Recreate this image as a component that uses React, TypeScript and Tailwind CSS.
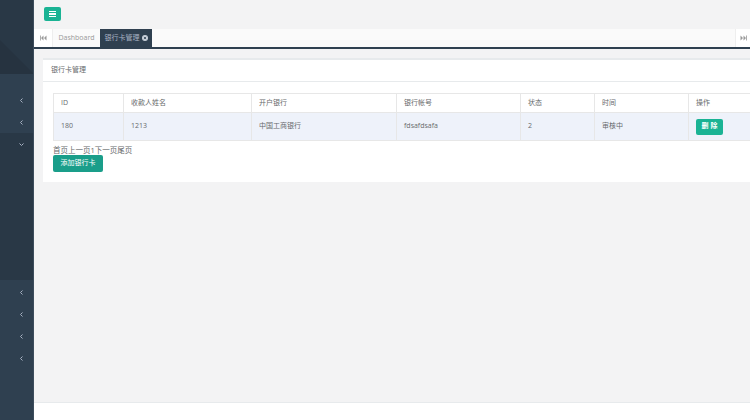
import React from "react";

const rows = [
  { id: "180", name: "1213", bank: "中国工商银行", account: "fdsafdsafa", status: "2", time: "审核中" },
];

const cols = [
  { label: "ID", w: "w-[70px]" },
  { label: "收款人姓名", w: "w-[128px]" },
  { label: "开户银行", w: "w-[145px]" },
  { label: "银行帐号", w: "w-[124px]" },
  { label: "状态", w: "w-[74px]" },
  { label: "时间", w: "w-[94px]" },
  { label: "操作", w: "w-[80px]" },
];

function Chevron({ down = false }: { down?: boolean }) {
  return (
    <svg width="5" height="5" viewBox="0 0 10 10" className={down ? "rotate-[-90deg]" : ""}>
      <path d="M7 1 L3 5 L7 9" fill="none" stroke="#a7b1c2" strokeWidth="2" />
    </svg>
  );
}

function NavItem({ down = false }: { down?: boolean }) {
  return (
    <div className="h-[22px] flex items-center justify-end pr-[9px]">
      <Chevron down={down} />
    </div>
  );
}

export default function App() {
  return (
    <div
      className="w-[750px] h-[420px] flex overflow-hidden bg-[#f3f3f4] text-[#676a6c]"
      style={{ fontFamily: '"Open Sans", "Noto Sans CJK SC", sans-serif' }}
    >
      {/* Sidebar */}
      <aside className="w-[34px] shrink-0 flex flex-col bg-[#2f4050] border-r border-[#3d4d5c]">
        <div className="h-[74px] bg-[#293846] relative overflow-hidden">
          <svg width="34" height="74" className="absolute inset-0">
            <polygon points="0,40 34,74 0,74" fill="#263340" />
          </svg>
        </div>
        <div className="pt-[15px]">
          <NavItem />
          <NavItem />
        </div>
        <div className="h-[147px] bg-[#293846]">
          <NavItem down />
        </div>
        <div className="pt-[1px]">
          <NavItem />
          <NavItem />
          <NavItem />
          <NavItem />
        </div>
      </aside>

      {/* Main */}
      <main className="flex-1 min-w-0 flex flex-col">
        <div className="h-[29px] flex items-start pt-[7px] pl-[10px]">
          <button className="w-[17px] h-[14px] rounded-[2px] bg-[#1ab394] flex flex-col items-center justify-center gap-[1px]">
            <span className="block w-[7px] h-[1.5px] bg-white" />
            <span className="block w-[7px] h-[1.5px] bg-white" />
            <span className="block w-[7px] h-[1.5px] bg-white" />
          </button>
        </div>

        {/* Tabs */}
        <div className="h-[20px] flex bg-[#fafafa] border-b-2 border-[#2f4050]">
          <div className="w-[19px] flex items-center justify-center border-r border-[#eee] bg-white">
            <svg width="7" height="6" viewBox="0 0 14 12">
              <path d="M7 1 L2 6 L7 11 Z M13 1 L8 6 L13 11 Z" fill="#999" />
              <rect x="0" y="1" width="1.6" height="10" fill="#999" />
            </svg>
          </div>
          <div className="w-[47px] flex items-center justify-center text-[7px] text-[#999]">Dashboard</div>
          <div className="w-[52px] flex items-center justify-center gap-[2px] bg-[#2f4050] text-[7px] text-[#a7b1c2]">
            <span>银行卡管理</span>
            <svg width="6" height="6" viewBox="0 0 12 12">
              <circle cx="6" cy="6" r="6" fill="#c9d0da" />
              <path d="M3.8 3.8 L8.2 8.2 M8.2 3.8 L3.8 8.2" stroke="#2f4050" strokeWidth="1.6" />
            </svg>
          </div>
          <div className="flex-1" />
          <div className="w-[15px] flex items-center justify-center border-l border-[#eee] bg-white">
            <svg width="7" height="6" viewBox="0 0 14 12">
              <path d="M1 1 L6 6 L1 11 Z M7 1 L12 6 L7 11 Z" fill="#999" />
              <rect x="12.4" y="1" width="1.6" height="10" fill="#999" />
            </svg>
          </div>
        </div>

        {/* Content */}
        <div className="flex-1 pt-[9px] pl-[9px]">
          <div className="w-[760px] bg-white border-t-2 border-[#e7eaec]">
            <div className="h-[22px] flex items-center px-[8px] border-b border-[#e7eaec] text-[7px]">银行卡管理</div>
            <div className="pt-[11px] pl-[10px] pb-[10px]">
              <table className="border-collapse text-[7px] text-[#676a6c]">
                <thead>
                  <tr className="h-[19px]">
                    {cols.map((c) => (
                      <th key={c.label} className={`${c.w} border border-[#e7e7e7] text-left font-normal px-[7px]`}>
                        {c.label}
                      </th>
                    ))}
                  </tr>
                </thead>
                <tbody>
                  {rows.map((r) => (
                    <tr key={r.id} className="h-[28px] bg-[#eef2fa]">
                      <td className="border border-[#e7e7e7] px-[7px]">{r.id}</td>
                      <td className="border border-[#e7e7e7] px-[7px]">{r.name}</td>
                      <td className="border border-[#e7e7e7] px-[7px]">{r.bank}</td>
                      <td className="border border-[#e7e7e7] px-[7px]">{r.account}</td>
                      <td className="border border-[#e7e7e7] px-[7px]">{r.status}</td>
                      <td className="border border-[#e7e7e7] px-[7px]">{r.time}</td>
                      <td className="border border-[#e7e7e7] px-[7px]">
                        <button className="block w-[27px] h-[16px] rounded-[2px] bg-[#1ab394] text-white font-bold text-[7px]">
                          删 除
                        </button>
                      </td>
                    </tr>
                  ))}
                </tbody>
              </table>
              <div className="mt-[4px] text-[7.5px] leading-[10px]">首页上一页1下一页尾页</div>
              <button className="block w-[50px] h-[17px] rounded-[2px] bg-[#1a9e8a] text-white text-[7px]">
                添加银行卡
              </button>
            </div>
          </div>
        </div>

        {/* Footer */}
        <div className="h-[18px] bg-white border-t border-[#e7eaec]" />
      </main>
    </div>
  );
}
